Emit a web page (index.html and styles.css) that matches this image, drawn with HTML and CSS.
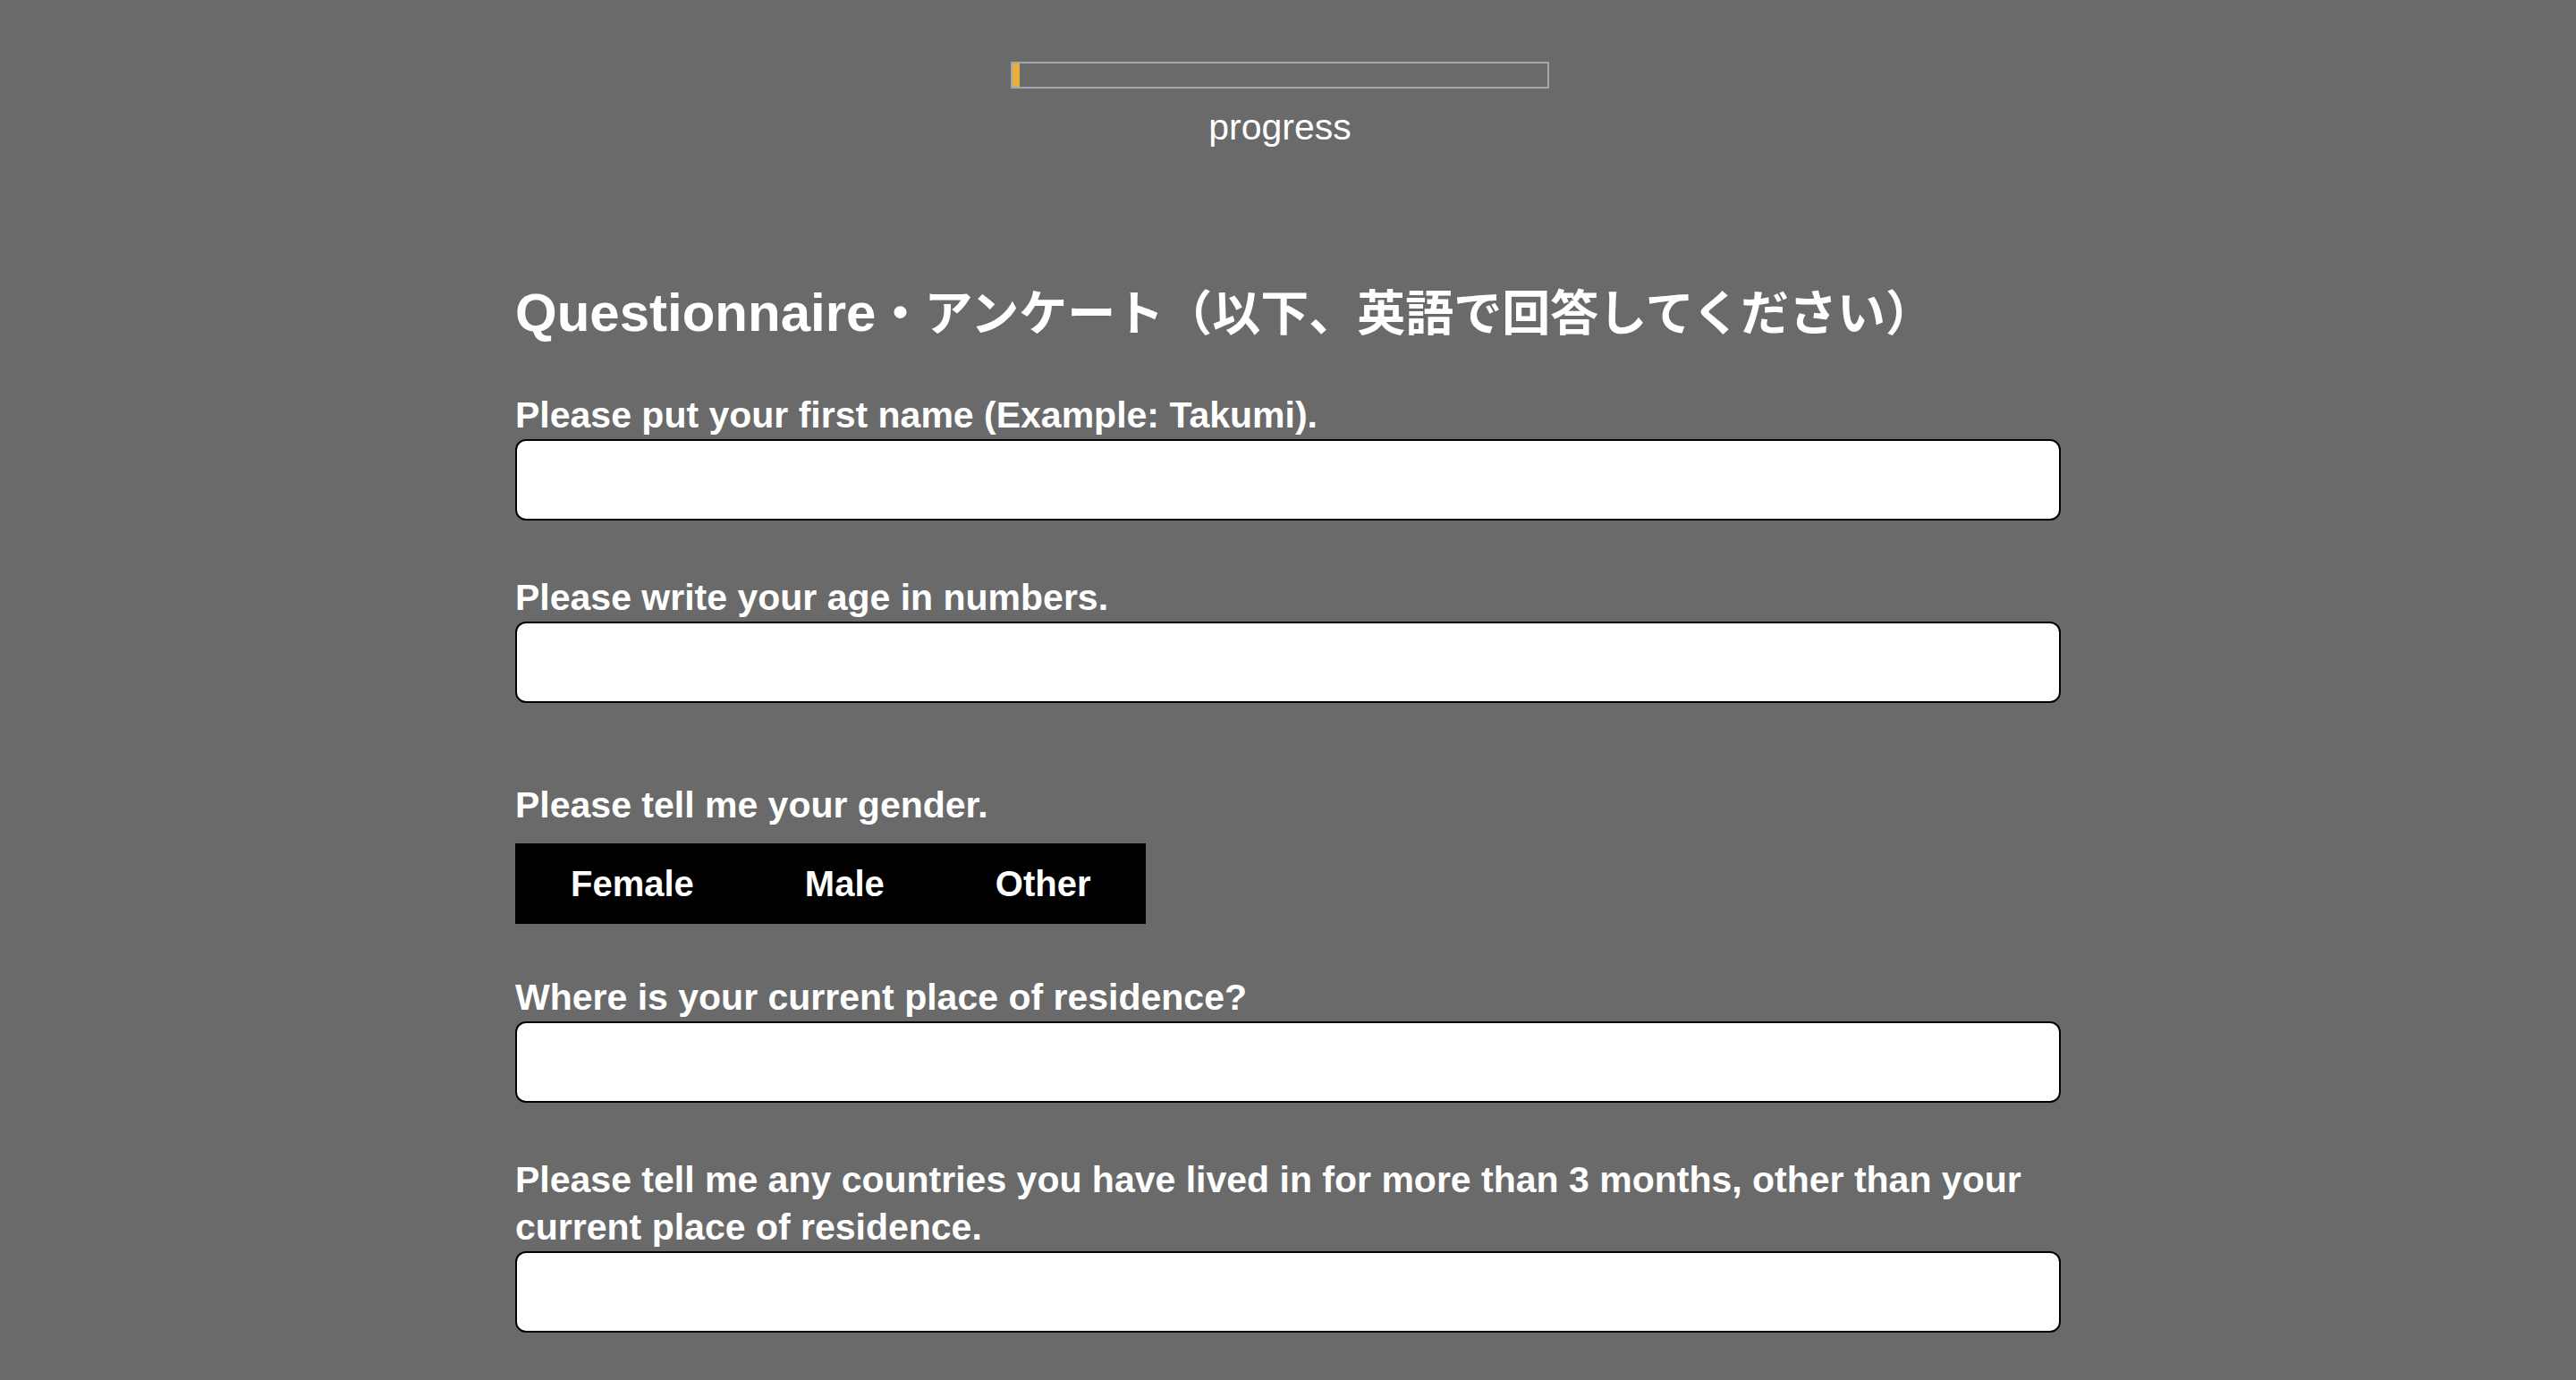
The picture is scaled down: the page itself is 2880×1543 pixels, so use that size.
FILE: index.html
```html
<!DOCTYPE html>
<html lang="ja">
<head>
<meta charset="utf-8">
<title>Questionnaire</title>
<link rel="stylesheet" href="styles.css">
</head>
<body>
<header class="progress-header">
  <div class="progress-track"><div class="progress-fill" style="width:1.3%"></div></div>
  <div class="progress-label">progress</div>
</header>
<main class="questionnaire">
  <h1 class="title">Questionnaire<span class="ja">・アンケート（以下、英語で回答してください）</span></h1>

  <div class="field">
    <label class="field-label" for="q-name">Please put your first name (Example: Takumi).</label>
    <input class="text-input" id="q-name" type="text">
  </div>

  <div class="field">
    <label class="field-label" for="q-age">Please write your age in numbers.</label>
    <input class="text-input" id="q-age" type="text">
  </div>

  <div class="field field-choice">
    <div class="field-label">Please tell me your gender.</div>
    <div class="segmented">
      <button class="segment" type="button">Female</button>
      <button class="segment" type="button">Male</button>
      <button class="segment" type="button">Other</button>
    </div>
  </div>

  <div class="field">
    <label class="field-label" for="q-home">Where is your current place of residence?</label>
    <input class="text-input" id="q-home" type="text">
  </div>

  <div class="field">
    <label class="field-label" for="q-countries">Please tell me any countries you have lived in for more than 3 months, other than your current place of residence.</label>
    <input class="text-input" id="q-countries" type="text">
  </div>
</main>
</body>
</html>
```
FILE: styles.css
```css
html, body {
  margin: 0;
  padding: 0;
}

body {
  background: #6a6a6a;
  color: #ffffff;
  font-family: "Liberation Sans", "Noto Sans CJK JP", sans-serif;
}

.progress-header {
  display: flex;
  flex-direction: column;
  align-items: center;
  padding-top: 69px;
  padding-right: 18px;
}

.progress-track {
  box-sizing: border-box;
  width: 602px;
  height: 30px;
  border: 2px solid #a2a4b2;
  background: #6a6a6a;
}

.progress-fill {
  height: 100%;
  background: #e9ae3a;
}

.progress-label {
  margin-top: 20px;
  font-size: 41px;
  line-height: 46px;
  font-weight: 400;
}

.questionnaire {
  width: 60%;
  margin: 0 auto;
  padding-top: 150px;
  padding-bottom: 120px;
}

.title {
  margin: 0 0 52px;
  font-size: 60px;
  line-height: 70px;
  font-weight: 700;
}

.title .ja {
  font-size: 54px;
}

.field {
  display: flex;
  flex-direction: column;
  margin-bottom: 60px;
}

.field-label {
  font-size: 41px;
  line-height: 53px;
  font-weight: 700;
}

.text-input {
  box-sizing: border-box;
  width: 100%;
  height: 91px;
  margin: 0;
  padding: 0 20px;
  border: 2px solid #000000;
  border-radius: 12px;
  background: #ffffff;
  font-family: inherit;
  font-size: 40px;
  outline: none;
}

.field-choice {
  padding-top: 28px;
  margin-bottom: 56px;
}

.segmented {
  display: flex;
  align-self: flex-start;
  margin-top: 16px;
  background: #000000;
}

.segment {
  height: 90px;
  margin: 0;
  padding: 0 62px;
  border: 0;
  background: #000000;
  color: #ffffff;
  font-family: inherit;
  font-size: 40px;
  font-weight: 700;
  line-height: 90px;
  cursor: pointer;
}
```
